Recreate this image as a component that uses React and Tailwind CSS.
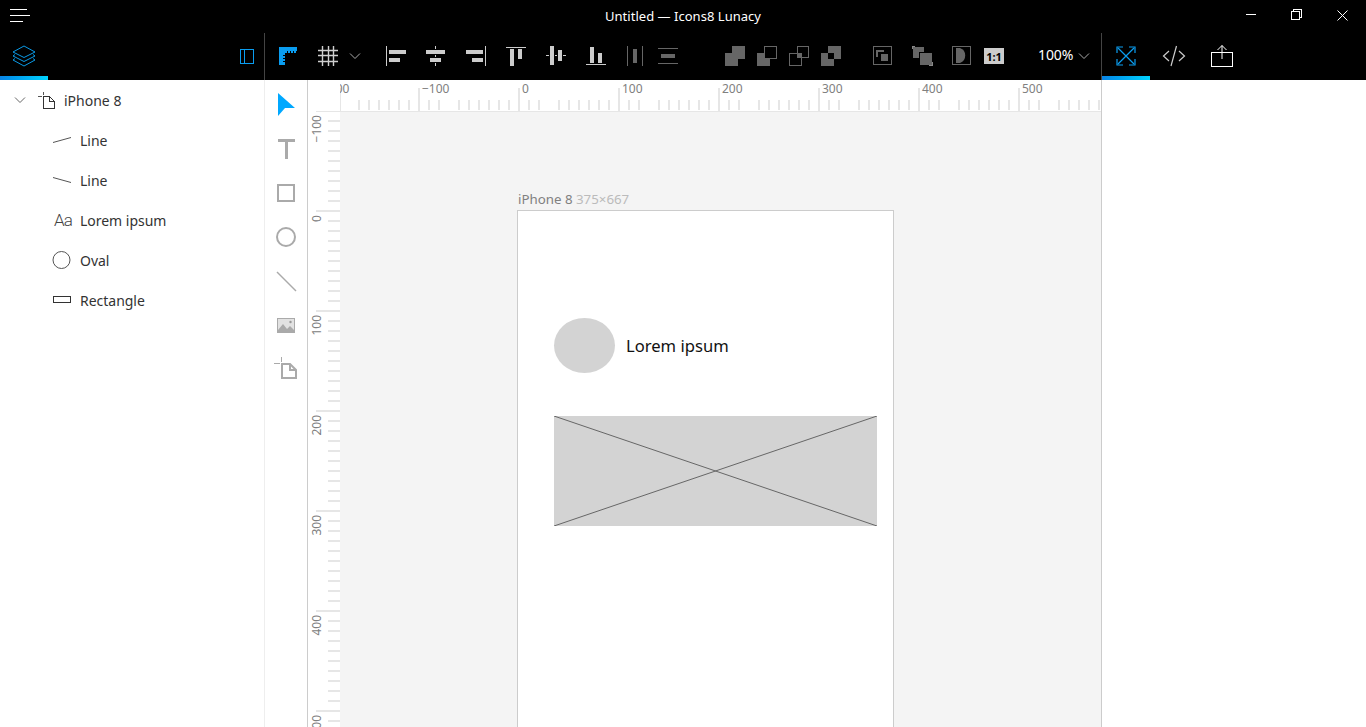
import React from "react";

const font = { fontFamily: '"Noto Sans", sans-serif' };

function Ic({ w = 22, h = 24, className = "", children }) {
  return (
    <svg width={w} height={h} viewBox={`0 0 ${w} ${h}`} className={`block shrink-0 ${className}`} shapeRendering="crispEdges" fill="none">
      {children}
    </svg>
  );
}

function Chevron({ color = "#aaa", className = "", w = 12 }) {
  return (
    <svg width={w} height="8" viewBox={`0 0 ${w} 8`} className={`block shrink-0 ${className}`} fill="none">
      <path d={`M1 1.5 L${w / 2} 6.5 L${w - 1} 1.5`} stroke={color} strokeWidth="1" />
    </svg>
  );
}

function Tab({ active, children }) {
  return (
    <div className="relative flex h-12 w-12 items-center justify-center shrink-0">
      {children}
      {active && <div className="absolute bottom-0 left-0 h-1 w-12 bg-gradient-to-r from-[#0a84e6] to-[#00d4ff]" />}
    </div>
  );
}

function Layers() {
  return (
    <svg width="24" height="22" viewBox="0 0 24 22" fill="none" stroke="#0a9be8" strokeWidth="1">
      <path d="M12 1 L23 7 L12 12.5 L1 7 Z" />
      <path d="M3 9.5 L1 11 L12 16.5 L23 11 L21 9.5" />
      <path d="M3 13.5 L1 15 L12 21 L23 15 L21 13.5" />
    </svg>
  );
}

function Header() {
  const c = "#cccccc";
  const d = "#666666";
  return (
    <div className="h-20 bg-black text-white flex flex-col shrink-0">
      <div className="grid grid-cols-[1fr_auto_1fr] h-8 items-center">
        <div className="pl-2.5">
          <svg width="20" height="14" viewBox="0 0 20 14" shapeRendering="crispEdges" className="block">
            <rect x="0" y="0" width="17" height="1" fill="#fff" />
            <rect x="0" y="6" width="20" height="1" fill="#fff" />
            <rect x="0" y="12" width="13" height="1" fill="#fff" />
          </svg>
        </div>
        <div className="text-[13px] text-white leading-none tracking-[0.03px]">Untitled — Icons8 Lunacy</div>
        <div className="flex justify-end">
          <div className="w-[46px] h-8 flex items-center justify-center">
            <svg width="10" height="10" viewBox="0 0 10 10" shapeRendering="crispEdges" className="block -mt-[2px]"><rect x="0" y="4" width="10" height="1" fill="#fff" /></svg>
          </div>
          <div className="w-[46px] h-8 flex items-center justify-center">
            <svg width="11" height="12" viewBox="0 0 11 12" fill="none" stroke="#fff" className="block -mt-[2px] mr-[2px]" shapeRendering="crispEdges">
              <rect x="0.5" y="2.5" width="8" height="8" rx="1" />
              <path d="M2.5 2.5 V0.5 H10.5 V8.5 H8.5" />
            </svg>
          </div>
          <div className="w-[46px] h-8 flex items-center justify-center">
            <svg width="11" height="11" viewBox="0 0 11 11" stroke="#fff" className="block -mt-[2px] mr-[1px]"><path d="M0.5 0.5 L10.5 10.5 M10.5 0.5 L0.5 10.5" /></svg>
          </div>
        </div>
      </div>
      <div className="flex h-12 items-center">
        <div className="w-[264px] flex items-center shrink-0">
          <Tab active><Layers /></Tab>
          <div className="ml-auto mr-[10px]">
            <svg width="14" height="15" viewBox="0 0 14 15" fill="none" stroke="#0a9df0" shapeRendering="crispEdges" className="block">
              <rect x="0.5" y="0.5" width="13" height="14" />
              <path d="M4.5 0.5 V14.5" />
            </svg>
          </div>
        </div>
        <div className="w-px h-[47px] bg-[#444] self-end shrink-0" />
        <Ic w={20} h={24} className="ml-[13px]">
          <path d="M1 3 H19 V9 H7 V21 H1 Z" fill="#0a9df0" />
          <path d="M9 6.5 V9 M12 6.5 V9 M15 6.5 V9 M18 6.5 V9 M4.5 11 H7 M4.5 14 H7 M4.5 17 H7" stroke="#000" />
        </Ic>
        <Ic w={22} h={24} className="ml-[19px]">
          <path d="M5.5 2 V22 M11.5 2 V22 M16.5 2 V22 M1 6.5 H21 M1 11.5 H21 M1 17.5 H21" stroke="#cfcfcf" strokeWidth="1.4" shapeRendering="auto" />
        </Ic>
        <Chevron className="ml-[10px]" />
        <div className="ml-[24px] flex gap-[18px]">
          <Ic><rect x="1" y="2" width="1" height="20" fill={c} /><rect x="4" y="6" width="17" height="4" fill={c} /><rect x="4" y="14" width="11" height="4" fill={c} /></Ic>
          <Ic><path d="M10.5 2 V5 M10.5 11 V13 M10.5 19 V22" stroke={c} /><rect x="1" y="6" width="19" height="4" fill={c} /><rect x="5" y="14" width="11" height="4" fill={c} /></Ic>
          <Ic><rect x="20" y="2" width="1" height="20" fill={c} /><rect x="1" y="6" width="17" height="4" fill={c} /><rect x="7" y="14" width="11" height="4" fill={c} /></Ic>
          <Ic><rect x="1" y="3" width="20" height="1" fill={c} /><rect x="5" y="5" width="4" height="17" fill={c} /><rect x="13" y="5" width="4" height="10" fill={c} /></Ic>
          <Ic><path d="M1 11.5 H4 M10 11.5 H12 M18 11.5 H21" stroke={c} /><rect x="5" y="2" width="4" height="19" fill={c} /><rect x="13" y="6" width="4" height="11" fill={c} /></Ic>
          <Ic><rect x="1" y="20" width="20" height="1" fill={c} /><rect x="5" y="3" width="4" height="16" fill={c} /><rect x="13" y="9" width="4" height="10" fill={c} /></Ic>
        </div>
        <Ic w={20} className="ml-[18px]">
          <rect x="2" y="2" width="1" height="20" fill={d} /><rect x="17" y="2" width="1" height="20" fill={d} /><rect x="8" y="5" width="4" height="14" fill={d} />
        </Ic>
        <Ic className="ml-[12px]">
          <rect x="1" y="4" width="20" height="1" fill={d} /><rect x="1" y="19" width="20" height="1" fill={d} /><rect x="4" y="10" width="14" height="4" fill={d} />
        </Ic>
        <div className="ml-[45px] flex gap-[10px]">
          <Ic><path d="M8 2 H21 V15 H14 V22 H1 V9 H8 Z" fill={d} /></Ic>
          <Ic><path d="M1 9 H8 V15 H14 V22 H1 Z" fill={d} /><rect x="8.5" y="2.5" width="12" height="12" stroke={d} /></Ic>
          <Ic><rect x="1.5" y="9.5" width="12" height="12" stroke={d} /><rect x="9.5" y="2.5" width="11" height="11" stroke={d} /><rect x="10" y="10" width="4" height="4" fill={d} /></Ic>
          <Ic><path d="M8 2 H21 V15 H14 V9 H8 Z" fill={d} /><path d="M1 9 H8 V15 H14 V22 H1 Z" fill={d} /></Ic>
        </div>
        <div className="ml-[29px] flex gap-[18px]">
          <Ic>
            <rect x="2.5" y="2.5" width="18" height="18" stroke={d} />
            <path d="M6 13 V7 H13" stroke={d} strokeWidth="2" />
            <rect x="10" y="10" width="7" height="7" fill={d} />
          </Ic>
          <Ic>
            <path d="M2 3 H13 V8 H8 V14 H2 Z" fill={d} />
            <rect x="9" y="9" width="12" height="12" fill={d} />
            <path d="M1 2 H4 M1 2 V5 M18 21.5 H22 M21.5 18 V22" stroke="#888" />
          </Ic>
          <Ic>
            <rect x="1.5" y="2.5" width="18" height="18" stroke={d} />
            <path d="M4 4 H8 A8 8 0 0 1 8 19 H4 Z" fill={d} shapeRendering="auto" transform="translate(1 0)" />
          </Ic>
        </div>
        <div className="ml-[11px] w-5 h-4 bg-[#cccccc] flex items-center justify-center text-[11px] font-bold text-black leading-none shrink-0">1:1</div>
        <div className="ml-[34px] mb-[2px] text-[14px] leading-none text-white w-[36px] tracking-[-0.1px] shrink-0">100%</div>
        <Chevron className="ml-[4px]" />
        <div className="ml-[11px] w-px h-[47px] bg-[#444] self-end shrink-0" />
        <Tab active>
          <svg width="20" height="20" viewBox="0 0 20 20" fill="none" stroke="#0a9df0" strokeWidth="1.2">
            <path d="M1 7 V1 H7 M13 1 H19 V7 M19 13 V19 H13 M7 19 H1 V13" />
            <path d="M2 2 L18 18 M18 2 L2 18" />
          </svg>
        </Tab>
        <Tab>
          <svg width="24" height="22" viewBox="0 0 24 22" fill="none" stroke="#ccc" strokeWidth="1.2">
            <path d="M7 6 L1.5 11 L7 16 M17 6 L22.5 11 L17 16 M14.5 1 L9 21" />
          </svg>
        </Tab>
        <Tab>
          <svg width="24" height="24" viewBox="0 0 24 24" fill="none" stroke="#fff">
            <path d="M1.5 8.5 H22.5 V22.5 H1.5 Z" shapeRendering="crispEdges" />
            <path d="M12 1.5 V15 M7.5 6 L12 1.5 L16.5 6" />
          </svg>
        </Tab>
      </div>
    </div>
  );
}

const icoStroke = "#555";

function LayerRow({ icon, label }) {
  return (
    <div className="h-10 flex items-center text-[14px] text-[#333] pl-[52px]">
      {icon}
      <span className="leading-none pt-[2px] tracking-[-0.02px]">{label}</span>
    </div>
  );
}

function LayerPanel() {
  return (
    <div className="w-[265px] shrink-0 bg-white border-r border-[#eeeeee]">
      <div className="h-10 flex items-center pl-[14px] text-[14px] text-[#333]">
        <Chevron color="#666" />
        <svg width="18" height="20" viewBox="0 0 18 20" fill="none" stroke="#333" className="block ml-[12px] mr-[8px]" shapeRendering="crispEdges">
          <path d="M0 6.5 H4 M5.5 2 V5" stroke="#555" />
          <path d="M5.5 6.5 V18.5 H16.5 V11.5 L11.5 6.5 Z M11.5 6.5 V11.5 H16.5" />
        </svg>
        <span className="leading-none pt-[2px]">iPhone 8</span>
      </div>
      <LayerRow label="Line" icon={<svg width="20" height="12" viewBox="0 0 20 12" stroke={icoStroke} className="block mr-[8px]"><path d="M1 8.5 L19 3.5" /></svg>} />
      <LayerRow label="Line" icon={<svg width="20" height="12" viewBox="0 0 20 12" stroke={icoStroke} className="block mr-[8px]"><path d="M1 3.5 L19 8.5" /></svg>} />
      <LayerRow label="Lorem ipsum" icon={<span className="w-5 mr-[8px] pl-[2px] text-[17px] font-['Roboto'] font-light leading-none text-[#444] tracking-[-0.8px]">Aa</span>} />
      <LayerRow label="Oval" icon={<svg width="20" height="18" viewBox="0 0 20 18" fill="none" stroke={icoStroke} className="block mr-[8px]"><circle cx="9.5" cy="9" r="8.5" /></svg>} />
      <LayerRow label="Rectangle" icon={<svg width="20" height="10" viewBox="0 0 20 10" fill="none" stroke="#333" className="block mr-[8px]" shapeRendering="crispEdges"><rect x="1.5" y="1.5" width="17" height="6" /></svg>} />
    </div>
  );
}

function Tool({ children }) {
  return <svg width="32" height="44" viewBox="0 0 32 44" className="block" fill="none">{children}</svg>;
}

function ToolColumn() {
  const g = "#aaaaaa";
  return (
    <div className="w-[43px] shrink-0 bg-white border-r border-[#cccccc] flex flex-col items-center pt-[3px]">
      <Tool><path d="M8 10 L25 25 L15 25 L8 33 Z" fill="#00a8ff" /></Tool>
      <Tool><path d="M8 12 H25 V15 H18 V32 H15 V15 H8 Z" fill={g} /></Tool>
      <Tool><rect x="8" y="14" width="16" height="16" stroke={g} strokeWidth="2" /></Tool>
      <Tool><circle cx="16" cy="22" r="9" stroke={g} strokeWidth="2" /></Tool>
      <Tool><path d="M7 13 L26 32" stroke={g} strokeWidth="1.5" /></Tool>
      <Tool>
        <path d="M7 15 H25 V30 H7 Z" fill={g} />
        <path d="M8 16 H24 V27 L20 23 L17 26 L13 21 L8 27 Z" fill="#e2e2e2" />
        <circle cx="20.5" cy="19" r="1.2" fill="#999" />
      </Tool>
      <Tool>
        <path d="M4 16.5 H10 M11.5 10 V15" stroke={g} />
        <path d="M12 17 H20 L26 23 V31 H12 Z M20 17 V23 H26" stroke={g} strokeWidth="2" />
      </Tool>
    </div>
  );
}

const hMajors = [-200, -100, 0, 100, 200, 300, 400, 500];
const vMajors = [0, 100, 200, 300, 400, 500];

function TopRuler() {
  const ticks = [];
  for (let x = -10; x < 770; x += 10) ticks.push(x);
  return (
    <div className="relative h-8 bg-white">
      <div className="absolute left-2 bottom-0 w-6 h-px bg-[#e6e6e6]" />
      <div className="relative h-8 ml-8 overflow-hidden">
        <svg width="761" height="32" viewBox="0 0 761 32" className="absolute inset-0" shapeRendering="crispEdges">
          {ticks.map((x) => (x % 100 === 0 ? null : <rect key={x} x={x + 8} y="20" width="2" height="10" fill="#e6e6e6" />))}
          {hMajors.map((m) => <rect key={m} x={178 + m} y="8" width="2" height="24" fill="#e6e6e6" />)}
          <rect x="0" y="31" width="761" height="1" fill="#e6e6e6" />
          <rect x="0" y="8" width="1" height="24" fill="#e6e6e6" />
        </svg>
        <span className="absolute top-[2px] left-[-18px] text-[12px] leading-[14px] text-[#808080]">−200</span>
        <span className="absolute top-[2px] left-[82px] text-[12px] leading-[14px] text-[#808080]">−100</span>
        <span className="absolute top-[2px] left-[182px] text-[12px] leading-[14px] text-[#808080]">0</span>
        <span className="absolute top-[2px] left-[282px] text-[12px] leading-[14px] text-[#808080]">100</span>
        <span className="absolute top-[2px] left-[382px] text-[12px] leading-[14px] text-[#808080]">200</span>
        <span className="absolute top-[2px] left-[482px] text-[12px] leading-[14px] text-[#808080]">300</span>
        <span className="absolute top-[2px] left-[582px] text-[12px] leading-[14px] text-[#808080]">400</span>
        <span className="absolute top-[2px] left-[682px] text-[12px] leading-[14px] text-[#808080]">500</span>
      </div>
    </div>
  );
}

function LeftRuler() {
  const ticks = [];
  for (let y = 0; y < 620; y += 10) ticks.push(y);
  const v = "absolute left-[2px] w-[14px] text-[12px] leading-[14px] text-[#808080] [writing-mode:vertical-rl] rotate-180 whitespace-nowrap";
  return (
    <div className="relative w-8 shrink-0 overflow-hidden bg-white">
      <svg width="32" height="615" viewBox="0 0 32 615" className="absolute inset-0" shapeRendering="crispEdges">
        {ticks.map((y) => <rect key={y} x="20" y={y + 8} width="12" height="2" fill="#e6e6e6" />)}
        {vMajors.map((m) => <rect key={m} x="8" y={98 + m} width="24" height="2" fill="#e6e6e6" />)}
      </svg>
      <span className={`${v} top-[3px]`}>−100</span>
      <span className={`${v} top-[103px]`}>0</span>
      <span className={`${v} top-[203px]`}>100</span>
      <span className={`${v} top-[303px]`}>200</span>
      <span className={`${v} top-[403px]`}>300</span>
      <span className={`${v} top-[503px]`}>400</span>
      <span className={`${v} top-[603px]`}>500</span>
    </div>
  );
}

function Canvas() {
  return (
    <div className="flex-1 bg-[#f4f4f4] overflow-hidden pl-[177px] pt-[80px]">
      <div className="h-[18px] pl-px text-[13.3px] leading-[15px] text-[#808080] whitespace-nowrap">
        iPhone 8 <span className="text-[#bbbbbb]">375×667</span>
      </div>
      <div className="w-[377px] h-[668px] bg-white border border-[#cccccc] pl-[36px] pt-[107px]">
        <div className="flex items-center">
          <div className="w-[61px] h-[55px] rounded-[50%] bg-[#d3d3d3]" />
          <div className="ml-[11px] pt-[2px] text-[16.6px] leading-none text-[#111]">Lorem ipsum</div>
        </div>
        <div className="mt-[43px] w-[323px] h-[110px] bg-[#d3d3d3]">
          <svg width="323" height="110" viewBox="0 0 323 110" className="block" stroke="#666" strokeWidth="1">
            <path d="M0 0 L323 110 M323 0 L0 110" />
          </svg>
        </div>
      </div>
    </div>
  );
}

export default function App() {
  return (
    <div className="w-[1366px] h-[727px] overflow-hidden flex flex-col bg-white" style={font}>
      <Header />
      <div className="flex flex-1 min-h-0">
        <LayerPanel />
        <ToolColumn />
        <div className="w-[794px] shrink-0 border-r border-[#cccccc] flex flex-col min-h-0">
          <TopRuler />
          <div className="flex flex-1 min-h-0">
            <LeftRuler />
            <Canvas />
          </div>
        </div>
        <div className="flex-1 bg-white" />
      </div>
    </div>
  );
}
